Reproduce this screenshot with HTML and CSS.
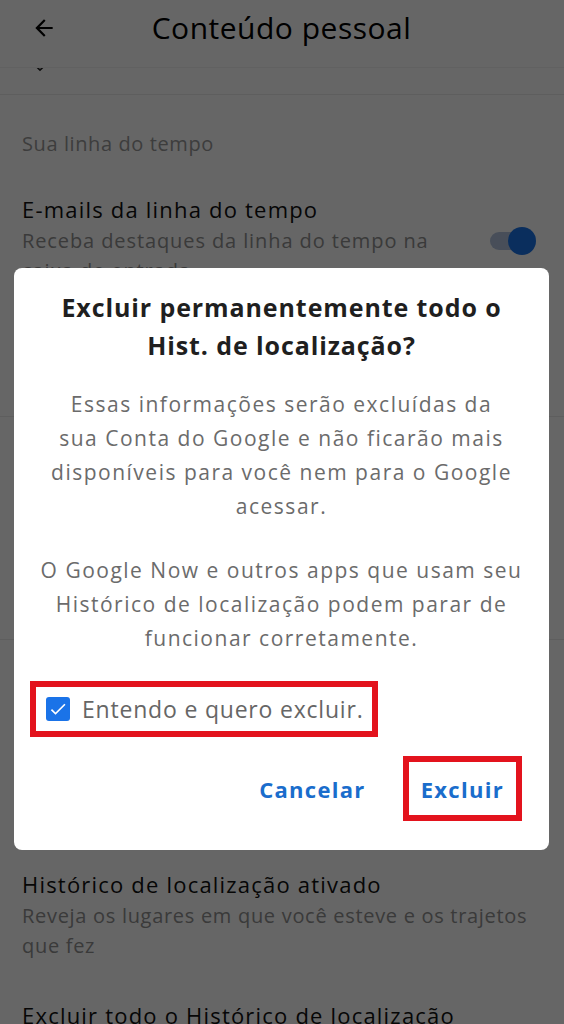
FILE: index.html
```html
<!DOCTYPE html>
<html lang="pt-BR">
<head>
  <meta charset="UTF-8">
  <meta name="viewport" content="width=device-width, initial-scale=1.0">
  <title>Conteúdo pessoal</title>
  <link rel="stylesheet" href="styles.css">
</head>
<body>
  <div class="header">
    <svg class="back" viewBox="0 0 24 24" width="26" height="26">
      <path d="M20 11H7.83l5.59-5.59L12 4l-8 8 8 8 1.41-1.41L7.83 13H20v-2z" fill="#000"/>
    </svg>
    <h1>Conteúdo pessoal</h1>
  </div>

  <div class="strip">
    <svg class="chevron" viewBox="0 0 24 24" width="20" height="20">
      <path d="M7.41 8.59L12 13.17l4.59-4.58L18 10l-6 6-6-6 1.41-1.41z" fill="#222"/>
    </svg>
  </div>

  <div class="section first">
    <div class="label">Sua linha do tempo</div>
    <div class="row">
      <div class="row-text">
        <div class="row-title">E-mails da linha do tempo</div>
        <div class="row-desc">Receba destaques da linha do tempo na<br>caixa de entrada</div>
      </div>
      <div class="toggle"><span class="thumb"></span></div>
    </div>
  </div>

  <div class="section mid"></div>

  <div class="section last">
    <div class="row loc">
      <div class="row-text">
        <div class="row-title">Histórico de localização ativado</div>
        <div class="row-desc">Reveja os lugares em que você esteve e os trajetos<br>que fez</div>
      </div>
    </div>
    <div class="row">
      <div class="row-text">
        <div class="row-title">Excluir todo o Histórico de localização</div>
      </div>
    </div>
  </div>

  <!-- dialogo de confirmacao -->
  <div class="overlay">
    <div class="dialog">
      <h2>Excluir permanentemente todo o<br>Hist. de localização?</h2>
      <p>Essas informações serão excluídas da<br>sua Conta do Google e não ficarão mais<br>disponíveis para você nem para o Google<br>acessar.</p>
      <p class="second">O Google Now e outros apps que usam seu<br>Histórico de localização podem parar de<br>funcionar corretamente.</p>

      <label class="confirm mark">
        <span class="checkbox">
          <svg viewBox="0 0 24 24" width="20" height="20">
            <path d="M9 16.17L4.83 12l-1.42 1.41L9 19 21 7l-1.41-1.41z" fill="#fff"/>
          </svg>
        </span>
        Entendo e quero excluir.
      </label>

      <div class="actions">
        <button class="btn">Cancelar</button>
        <button class="btn mark">Excluir</button>
      </div>
    </div>
  </div>
</body>
</html>
```

FILE: styles.css
```css
* {
  box-sizing: border-box;
}

body {
  margin: 0;
  font-family: 'Open Sans', sans-serif;
  background: #fff;
  color: #222;
  height: 1024px;
  overflow: hidden;
}

.header {
  height: 68px;
  display: flex;
  align-items: center;
  border-bottom: 1px solid #f2f2f2;
}

.back {
  margin-left: 31px;
  margin-top: -12px;
}

.header h1 {
  flex: 1;
  margin: -12px 0 0;
  padding-right: 58px;
  text-align: center;
  font-size: 30px;
  letter-spacing: 0.5px;
  font-weight: 400;
  color: #000;
}

.strip {
  height: 27px;
  overflow: hidden;
  border-bottom: 1px solid #ececec;
}

.chevron {
  display: block;
  margin: -10px 0 0 30px;
}

.section {
  padding: 0 22px;
  border-bottom: 1px solid #ececec;
}

.section.first {
  height: 322px;
}

.section.mid {
  height: 223px;
}

.section.last {
  border-bottom: none;
  padding-top: 230px;
}

.label {
  padding-top: 36px;
  font-size: 20px;
  letter-spacing: 0.6px;
  line-height: 26px;
  color: #999;
}

.row {
  display: flex;
  align-items: center;
  padding-top: 40px;
}

.row-text {
  flex: 1;
}

.row-title {
  font-size: 22px;
  letter-spacing: 1.2px;
  line-height: 28px;
  color: #111;
}

.row-desc {
  margin-top: 3px;
  font-size: 20px;
  letter-spacing: 0.9px;
  line-height: 30px;
  color: #919191;
}

.section.first .row {
  padding-top: 38px;
}

.row.loc {
  padding-top: 0;
}

.row.loc .row-desc {
  letter-spacing: 0.7px;
}

.toggle {
  width: 40px;
  height: 18px;
  border-radius: 9px;
  background: #b3c4de;
  position: relative;
  margin: 0 12px 0 0;
}

.thumb {
  position: absolute;
  right: -6px;
  top: -5px;
  width: 28px;
  height: 28px;
  border-radius: 50%;
  background: #1a73e8;
}

.overlay {
  position: fixed;
  top: 0;
  left: 0;
  right: 0;
  bottom: 0;
  background: rgba(0, 0, 0, 0.6);
  padding: 268px 15px 0 14px;
}

.dialog {
  background: #fff;
  border-radius: 8px;
  padding: 20px 0 29px;
}

.dialog h2 {
  margin: 0;
  text-align: center;
  font-size: 25px;
  letter-spacing: 0.9px;
  line-height: 38px;
  font-weight: 700;
  color: #1f1f1f;
}

.dialog p {
  margin: 23px 0 0;
  text-align: center;
  font-size: 21px;
  letter-spacing: 1.5px;
  line-height: 34px;
  color: #6b6b6b;
}

.dialog p.second {
  margin-top: 30px;
}

.mark {
  border: 6px solid #e3131d;
}

.confirm {
  display: inline-flex;
  align-items: center;
  gap: 12px;
  height: 56px;
  margin: 26px 0 0 16px;
  padding: 0 8px 0 10px;
  font-size: 23px;
  letter-spacing: 0.8px;
  color: #666;
}

.checkbox {
  width: 24px;
  height: 24px;
  border-radius: 3px;
  background: #1a73e8;
  display: flex;
  align-items: center;
  justify-content: center;
}

.actions {
  display: flex;
  justify-content: flex-end;
  align-items: center;
  gap: 37px;
  margin: 19px 27px 0 0;
}

.btn {
  background: none;
  border: none;
  font-family: 'Open Sans', sans-serif;
  font-size: 22px;
  letter-spacing: 1.3px;
  font-weight: 700;
  color: #1a6dcc;
  padding: 0;
  height: 65px;
}

.btn.mark {
  border: 6px solid #e3131d;
  padding: 0 12px;
}
```
